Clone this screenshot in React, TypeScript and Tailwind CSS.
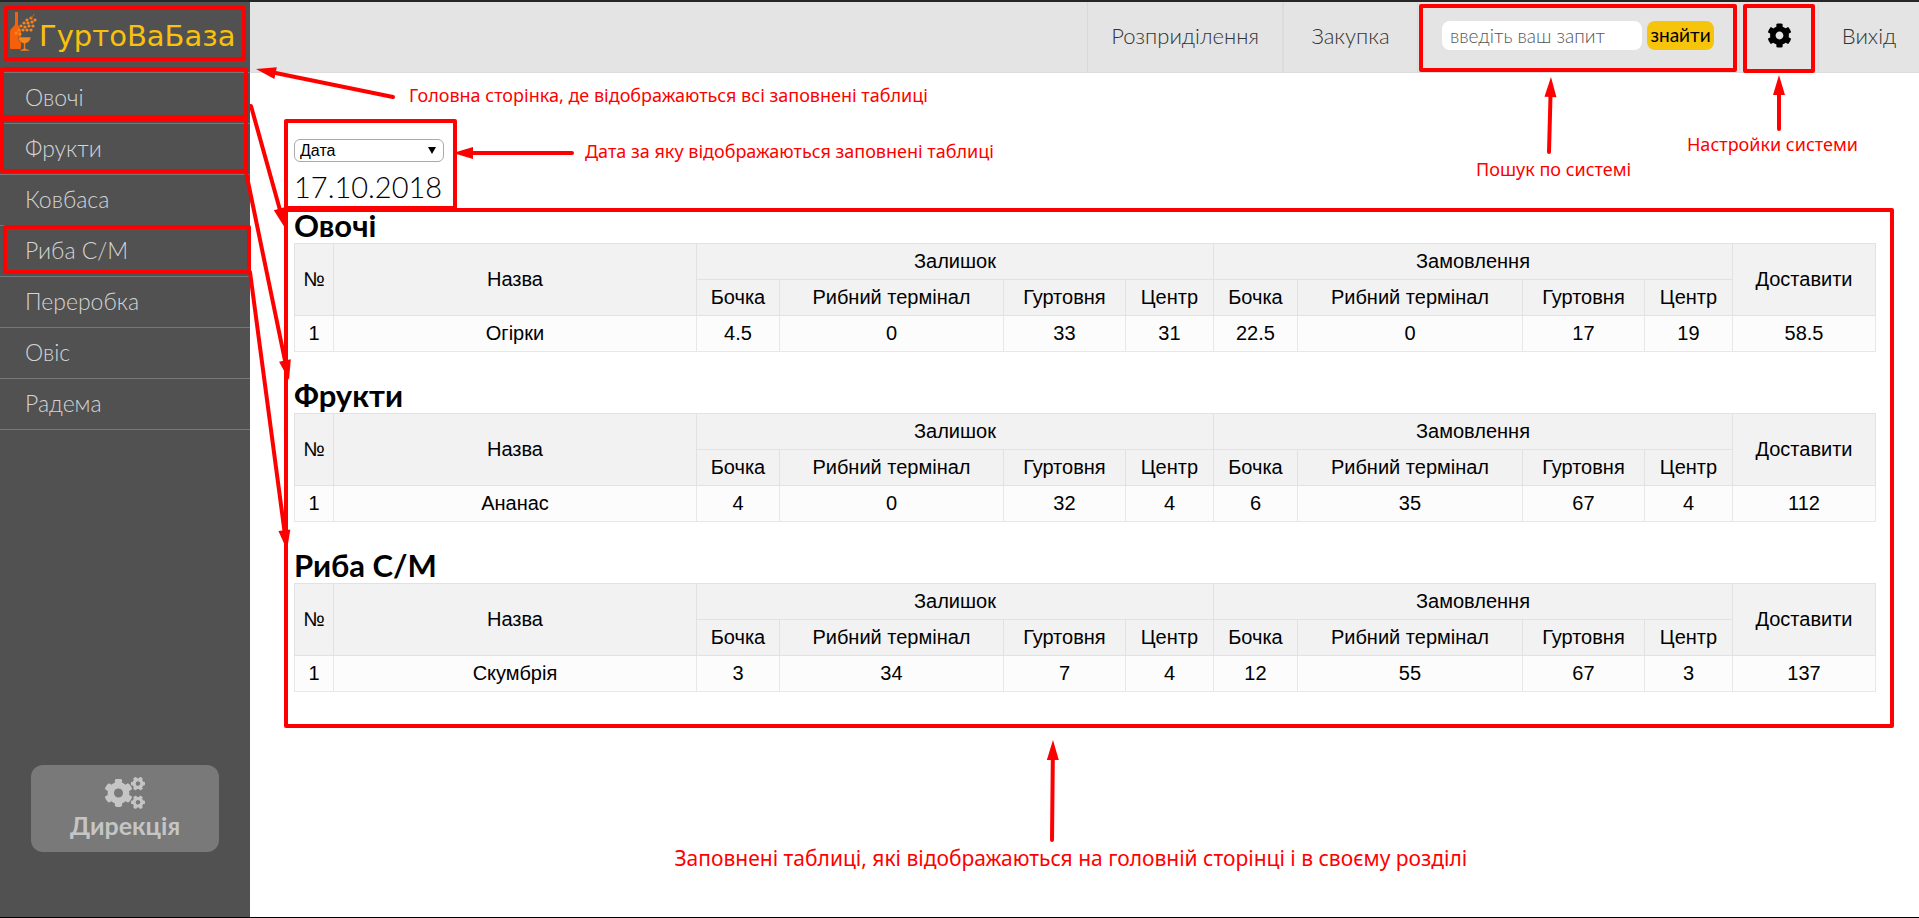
import type { ReactNode } from "react";
import { FaCog, FaCogs } from "react-icons/fa";

const categories = ["Овочі", "Фрукти", "Ковбаса", "Риба С/М", "Переробка", "Овіс", "Радема"];
const places = ["Бочка", "Рибний термінал", "Гуртовня", "Центр"];

const tables = [
  { title: "Овочі", name: "Огірки", values: ["4.5", "0", "33", "31", "22.5", "0", "17", "19", "58.5"] },
  { title: "Фрукти", name: "Ананас", values: ["4", "0", "32", "4", "6", "35", "67", "4", "112"] },
  { title: "Риба С/М", name: "Скумбрія", values: ["3", "34", "7", "4", "12", "55", "67", "3", "137"] },
];

function Frame({ className }: { className: string }) {
  return <div aria-hidden className={`pointer-events-none absolute z-10 rounded-xs border-4 border-[#ff0000] ${className}`} />;
}

type Line = [number, number, number, number];

function Arrows({ lines }: { lines: Line[] }) {
  return (
    <svg aria-hidden className="pointer-events-none absolute top-0 left-0 z-20 size-px overflow-visible" fill="#ff0000" stroke="#ff0000">
      {lines.map(([x1, y1, x2, y2]) => {
        const len = Math.hypot(x2 - x1, y2 - y1);
        const ux = (x2 - x1) / len;
        const uy = (y2 - y1) / len;
        const bx = x2 - ux * 20;
        const by = y2 - uy * 20;
        return (
          <g key={`${x1}-${y1}`}>
            <line x1={x1} y1={y1} x2={bx} y2={by} strokeWidth="4" strokeLinecap="round" />
            <polygon stroke="none" points={`${x2},${y2} ${bx - uy * 6},${by + ux * 6} ${bx + uy * 6},${by - ux * 6}`} />
          </g>
        );
      })}
    </svg>
  );
}

function Caption({ className, children }: { className: string; children: ReactNode }) {
  return (
    <p className={`absolute z-10 font-['Noto_Sans',sans-serif] leading-6 whitespace-nowrap text-[#ff0000] ${className}`}>{children}</p>
  );
}

function Logo() {
  const grapes = [
    [19, 8], [23, 6], [16, 11], [20, 11], [24, 10], [27, 8], [13, 14], [17, 15], [21, 14], [25, 14], [11, 18], [15, 18], [19, 18], [23, 18], [8, 21], [12, 22],
  ];
  return (
    <svg aria-hidden viewBox="0 0 29 40" className="h-10 w-[29px] shrink-0" fill="#f5600a">
      <path d="M7 0h3v12c.4 3 3 4 3 8v16q0 1-1 1H3q-1 0-1-1V20c0-4 4.600-5 5-8z" />
      <g fill="#f7851f">
        {grapes.map(([x, y]) => <circle key={`${x}-${y}`} cx={x} cy={y} r="1.600" />)}
      </g>
      <path d="M23 6c1-2 3-2 3-4" fill="none" stroke="#d9600f" />
      <path d="M10 25h13c-.5 4-3 6-5.500 6.500v5l4 1.500v1H12v-1l3.700-1.500v-5C13 31 10.500 29 10 25z" fill="#f7851f" stroke="#515151" strokeWidth="0.6" />
    </svg>
  );
}

function StockTable({ title, name, values }: (typeof tables)[number]) {
  return (
    <section className="mb-7">
      <h2 className="flex h-[33px] items-center pb-1 text-[31px] leading-8 font-bold">{title}</h2>
      <table className="w-full table-fixed border-collapse text-center font-['Liberation_Sans',Arial,sans-serif] text-xl leading-6 [&_td]:h-9 [&_td]:border [&_td]:border-[#e7e7e7] [&_td]:bg-[#fcfcfc] [&_td]:pb-0.5 [&_th]:h-9 [&_th]:border [&_th]:border-[#e2e2e2] [&_th]:bg-[#f2f2f2] [&_th]:pb-0.5 [&_th]:font-normal">
        <colgroup>
          <col className="w-[39px]" />
          <col />
          <col className="w-[83px]" />
          <col className="w-56" />
          <col className="w-[122px]" />
          <col className="w-[88px]" />
          <col className="w-[84px]" />
          <col className="w-[225px]" />
          <col className="w-[122px]" />
          <col className="w-[88px]" />
          <col className="w-[143px]" />
        </colgroup>
        <thead>
          <tr>
            <th rowSpan={2}>№</th>
            <th rowSpan={2}>Назва</th>
            <th colSpan={4}>Залишок</th>
            <th colSpan={4}>Замовлення</th>
            <th rowSpan={2}>Доставити</th>
          </tr>
          <tr>
            {[...places, ...places].map((place, i) => <th key={i}>{place}</th>)}
          </tr>
        </thead>
        <tbody>
          <tr>
            <td>1</td>
            <td>{name}</td>
            {values.map((value, i) => <td key={i}>{value}</td>)}
          </tr>
        </tbody>
      </table>
    </section>
  );
}

export default function App() {
  return (
    <div className="relative flex min-h-screen border-t-2 border-b border-t-[#262626] border-b-black bg-white font-[Lato,sans-serif] text-black">
      <aside className="relative flex w-[250px] shrink-0 flex-col bg-[#515151] text-[#c5c5c5]">
        <a href="#" className="flex h-[71px] items-start border-b border-[#777] pt-[10px] pl-2">
          <Logo />
          <span className="pt-2 pl-0.5 font-['DejaVu_Sans',sans-serif] text-[29px] leading-8 text-[#f9c10b]">ГуртоВаБаза</span>
        </a>
        <nav>
          {categories.map((category) => (
            <a key={category} href="#" className="flex h-[51px] items-center border-b border-[#777] pb-px pl-[25px] text-[23px] font-light text-[#d4d4d4]">
              {category}
            </a>
          ))}
        </nav>
        <button type="button" className="mx-auto mt-auto mb-[65px] flex h-[87px] w-[188px] flex-col items-center justify-center rounded-xl bg-[#797979] text-[25px] leading-8 font-bold">
          <FaCogs className="h-8 w-10" />
          Дирекція
        </button>
        <Frame className="top-1 left-1 h-[55px] w-[242px]" />
        <Frame className="top-[65px] left-0 h-[52px] w-[248px]" />
        <Frame className="top-[115px] left-0 h-14 w-[248px]" />
        <Frame className="top-[223px] left-[3px] h-[49px] w-[248px]" />
      </aside>

      <div className="flex min-w-0 flex-1 flex-col">
        <header className="flex h-[71px] justify-end border-b border-[#dcdcdc] bg-[#e4e4e4] text-[22px] font-light text-[#333]">
          <a href="#" className="flex w-[195px] items-center justify-center border-l border-[#d9d9d9] pb-1">Розприділення</a>
          <a href="#" className="flex w-[135px] items-center justify-center border-l-2 border-[#dcdcdc] pb-1">Закупка</a>
          <form className="relative flex items-center gap-[5px] border-l border-[#dcdcdc] pr-[25px] pb-1 pl-6">
            <input aria-label="Пошук" placeholder="введіть ваш запит" className="h-[29px] w-[200px] rounded-lg bg-white px-2 text-[19px] placeholder:text-[#555]" />
            <button type="button" className="h-[29px] w-[67px] rounded-lg bg-[#f7c40c] text-[19px] leading-6 font-normal text-black">знайти</button>
            <Frame className="top-0.5 right-0.5 bottom-0 left-px" />
            <Arrows lines={[[131, 150, 133, 75]]} />
            <Caption className="top-[155px] left-[58px] text-lg font-normal">Пошук по системі</Caption>
          </form>
          <button type="button" aria-label="Настройки" className="relative flex w-[79px] items-center justify-center border-l border-[#dcdcdc] pb-1 text-black">
            <FaCog className="size-[25px]" />
            <Frame className="top-0.5 right-[3px] -bottom-px left-[3px]" />
            <Arrows lines={[[39, 127, 39, 73]]} />
            <Caption className="top-[130px] -left-[53px] text-lg font-normal">Настройки системи</Caption>
          </button>
          <a href="#" className="flex w-[101px] items-center justify-center border-l border-[#dcdcdc] pb-1">Вихід</a>
        </header>

        <main className="relative pt-12">
          <Caption className="top-[10px] left-[159px] text-lg">Головна сторінка, де відображаються всі заповнені таблиці</Caption>
          <div className="relative ml-[34px] flex w-[173px] flex-col pt-[18px] pl-[10px]">
            <div className="relative w-[150px]">
              <select aria-label="Дата" className="block h-[23px] w-full appearance-none rounded-md border border-[#a9a9a9] bg-white px-[5px] font-['Liberation_Sans',Arial,sans-serif] text-base leading-5">
                <option>Дата</option>
              </select>
              <svg aria-hidden viewBox="0 0 8 7" className="pointer-events-none absolute top-2 right-2 h-[7px] w-2"><path d="M0 0h8L4 7z" /></svg>
            </div>
            <p className="text-[29px] leading-[50px] font-light -mb-0.5">17.10.2018</p>
            <Frame className="-top-0.5 right-0 bottom-0 left-0" />
            <Caption className="top-[18px] left-[301px] text-lg">Дата за яку відображаються заповнені таблиці</Caption>
            <Arrows lines={[[288, 32, 169, 32]]} />
          </div>
          <div className="relative mr-[25px] ml-[34px] pr-[18px] pb-2 pl-[10px]">
            <div className="flow-root">
              {tables.map((table) => <StockTable key={table.title} {...table} />)}
            </div>
            <Frame className="inset-x-0 -top-0.5 bottom-0" />
          </div>
          <div className="relative mx-auto w-[820px] text-center">
            <Arrows lines={[[377, 112, 378, 12]]} />
            <Caption className="top-[118px] left-0 text-[21px]">Заповнені таблиці, які відображаються на головній сторінці і в своєму розділі</Caption>
          </div>
        </main>
      </div>

      <Arrows
        lines={[
          [393, 95, 256, 67],
          [251, 104, 285, 226],
          [246, 170, 289, 378],
          [250, 270, 287, 548],
        ]}
      />
    </div>
  );
}
